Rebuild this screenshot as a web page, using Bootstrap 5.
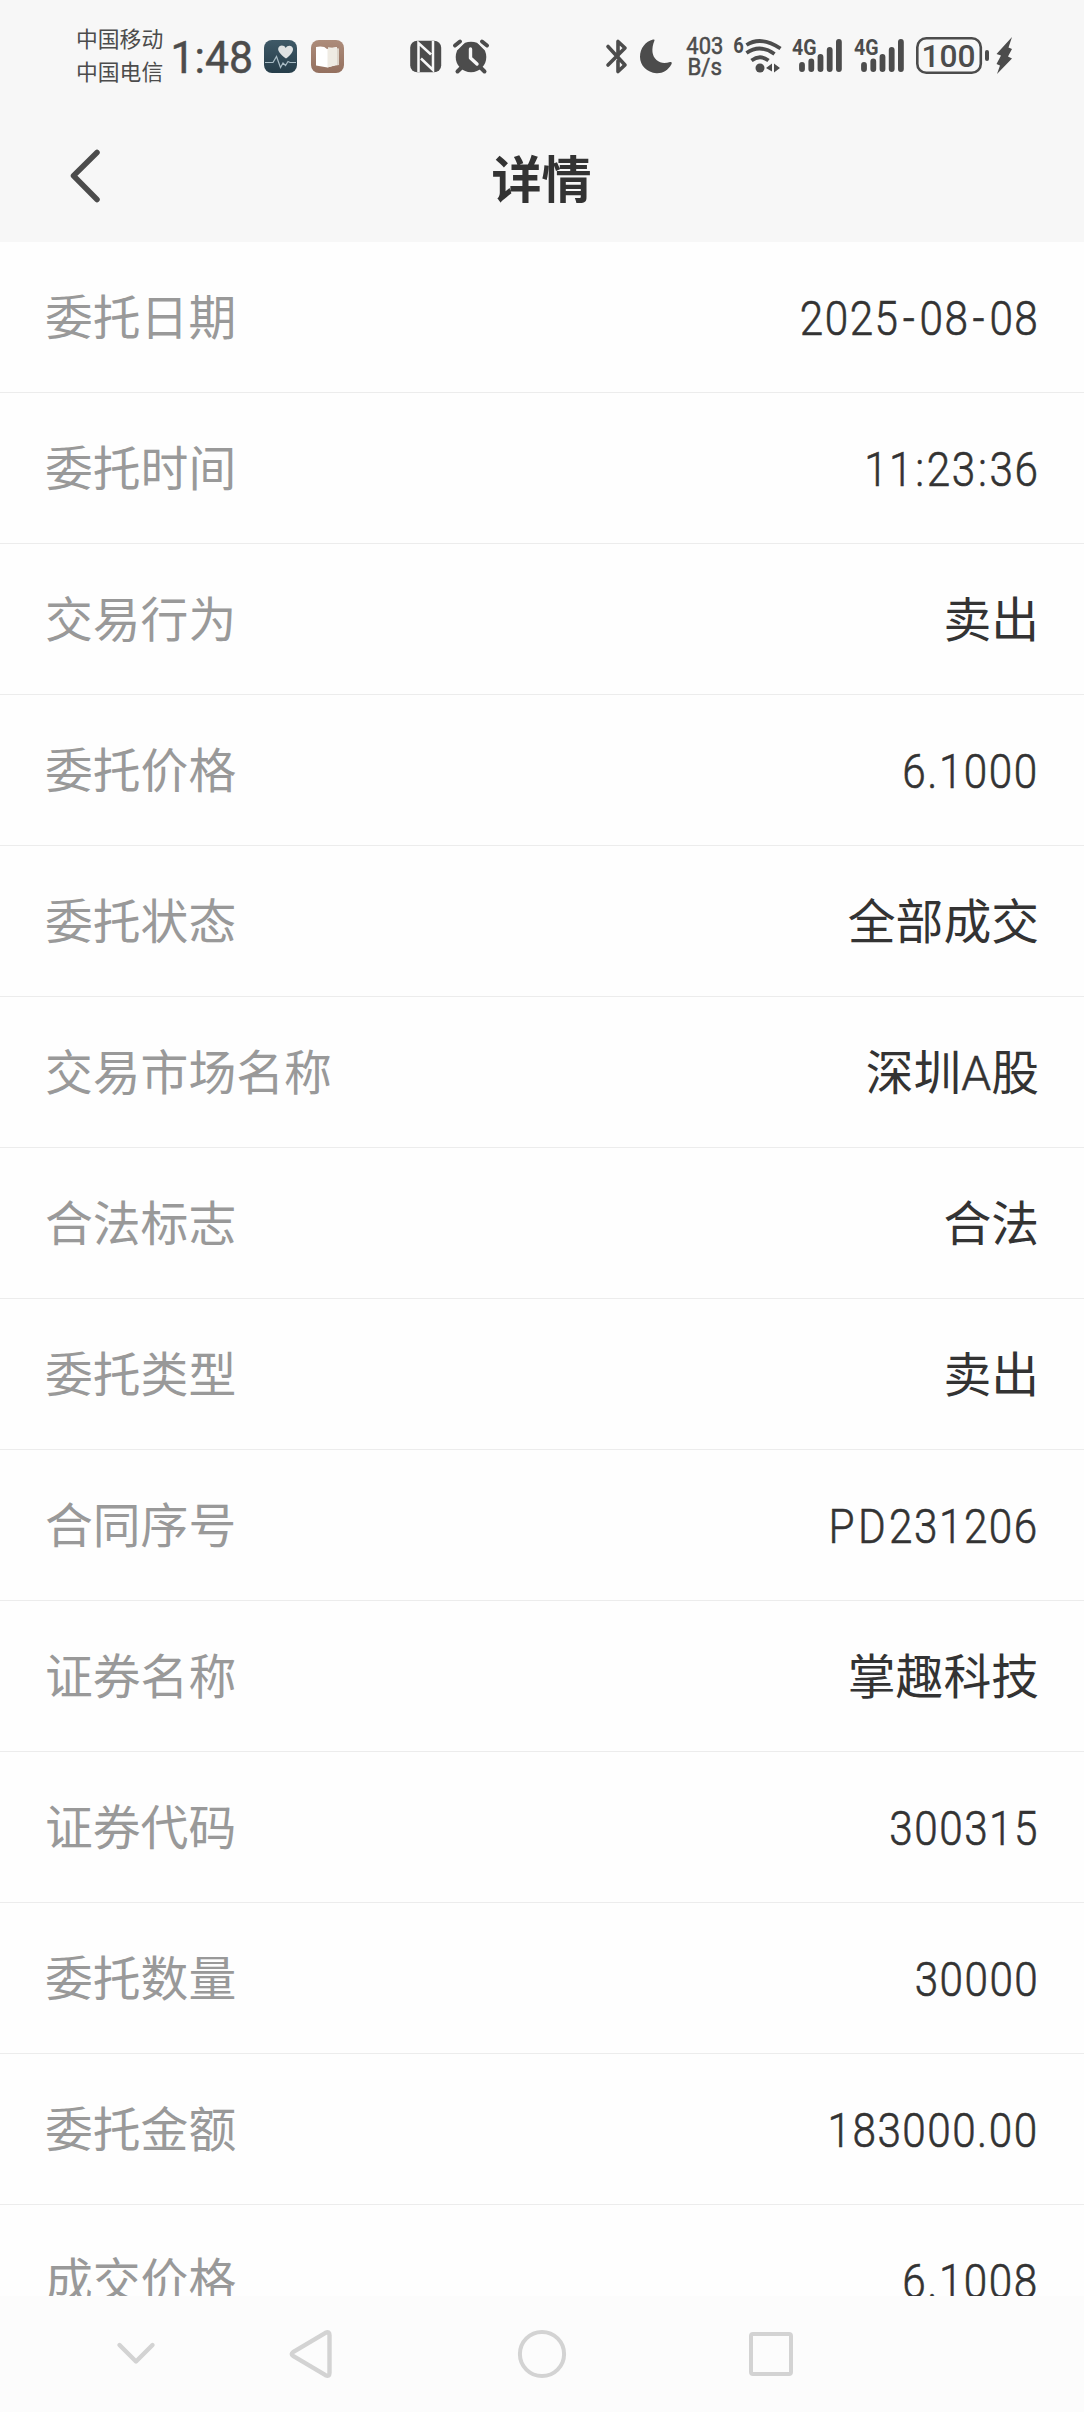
<!DOCTYPE html>
<html lang="zh-CN">
<head>
<meta charset="utf-8">
<meta name="viewport" content="width=device-width, initial-scale=1">
<title>详情</title>
<link rel="stylesheet" href="https://cdn.jsdelivr.net/npm/bootstrap@5.3.0/dist/css/bootstrap.min.css">
<style>
  body { font-family: Roboto, "Noto Sans CJK SC", sans-serif; color: #333; }
  .screen { height: 2412px; }
  .topbar { background: #f7f7f7; }
  .status { height: 110px; padding-left: 76px; color: #4c4c4c; fill: #4c4c4c; }
  .status svg, .titlebar svg, .sysnav svg { display: block; flex: none; }
  .carriers { width: 96px; font-size: 21.8px; line-height: 33px; padding-top: 21px; font-family: "Noto Sans CJK SC", sans-serif; }
  .titlebar { height: 132px; padding: 0 71px 0 70px; }
  .titlebar h1 { font-size: 50px; line-height: 60px; font-family: "Noto Sans CJK SC", sans-serif; }
  .side { width: 30px; }
  .details { background: #fefefe; }
  .detail { height: 151px; flex: none; padding: 0 45px; border-bottom: 1px solid #ececec; font-size: 47.8px; line-height: 72px; }
  .detail dt { font-weight: 400; color: #999; font-family: "Noto Sans CJK SC", sans-serif; padding-bottom: 4px; }
  .detail dd { font-family: "Noto Sans CJK SC", sans-serif; padding-bottom: 4px; }
  .detail dd.num { font-family: Roboto, sans-serif; font-weight: 300; font-size: 48.6px; letter-spacing: 1.7px; transform: scaleX(.87); transform-origin: right; -webkit-text-stroke: .6px #333; padding: 4px 0 0; }
  .latin { font-family: Roboto, sans-serif; font-weight: 300; line-height: 1; -webkit-text-stroke: .5px #333; }
  .prefix { letter-spacing: 4px; }
  .dash { display: inline-block; width: 23px; text-align: center; }
  .sep { padding: 0 1.4px; }
  .sysnav { height: 116px; background: #fcfcfc; flex: none; padding-left: 112px; }
</style>
</head>
<body>
<div class="screen d-flex flex-column overflow-hidden">
  <header class="topbar flex-shrink-0">
    <div class="status d-flex">
      <div class="carriers text-nowrap">中国移动<br>中国电信</div>
      <svg width="84" height="110" viewBox="172 0 84 110"><text x="170.500" y="72.500" font-size="44" textLength="82.500" lengthAdjust="spacingAndGlyphs" stroke="#4c4c4c" stroke-width=".5" font-family="Roboto">1:48</text></svg>
      <!-- health and reading app icons -->
      <svg width="92" height="110" viewBox="256 0 92 110">
        <defs>
          <linearGradient id="gh" x2="0" y2="1"><stop stop-color="#3f5967"/><stop offset="1" stop-color="#263e4a"/></linearGradient>
          <linearGradient id="gb" x2="0" y2="1"><stop stop-color="#ad8c7a"/><stop offset="1" stop-color="#94705f"/></linearGradient>
        </defs>
        <rect x="264" y="40" width="33" height="33" rx="8" fill="url(#gh)"/>
        <path d="M286 58.500 C280 54 277.800 51 278.200 48.500 C278.800 45 284 44.500 285.700 48 C287.500 44.500 292.500 45.300 293 48.700 C293.300 52 290 55.500 286 58.500Z" fill="#dfe2e3"/>
        <path d="M265 62.500H273L276.500 56.500L280.500 67.500L283 63L285.500 65.500L288 61.500L290 62.500H296" fill="none" stroke="#a9bcc5" stroke-width="1.200"/>
        <rect x="311" y="40" width="33" height="33" rx="8" fill="url(#gb)"/>
        <path d="M328 47 L339 48.500V65L328 67Z" fill="#ddd4c9"/>
        <path d="M316 47 Q324 45.500 327 49 L337 47V64.500L327.500 67.500L316 65.500Z" fill="#fff"/>
        <path d="M327.500 49 L337 47V64.500L327.500 67.500Z" fill="#efebe3"/>
      </svg>
      <!-- NFC and alarm -->
      <svg width="142" height="110" viewBox="348 0 142 110">
        <rect x="410.200" y="40.800" width="31" height="31.400" rx="7"/>
        <path d="M418.500 72V43L431 54.500M433 41V70L421 58.500" fill="none" stroke="#f7f7f7" stroke-width="2.500"/>
        <circle cx="471" cy="57" r="15.300"/>
        <path d="M455 45.500L460 41.500M487 45.500L482 41.500M461 68L457.500 71.500M481 68L484.500 71.500" stroke="#4c4c4c" stroke-width="4" stroke-linecap="round"/>
        <path d="M457 49.500L464 42.500M485 49.500L478 42.500" stroke="#f7f7f7" stroke-width="1.600"/>
        <path d="M470.500 49V58L477 64" fill="none" stroke="#f7f7f7" stroke-width="3.400" stroke-linecap="round" stroke-linejoin="round"/>
      </svg>
      <!-- Bluetooth, do not disturb, network speed -->
      <svg width="238" height="110" viewBox="490 0 238 110">
        <path d="M608 46.500L625 65L618 71.500V61M608 65L625 48L618 41.500V56" fill="none" stroke="#4c4c4c" stroke-width="3.600" stroke-linecap="round" stroke-linejoin="round"/>
        <path d="M654.500 40.500C651 49 652 56 656.500 60C660.500 63.500 665 63.500 670 62Q672.500 61.500 671.600 64C668 70.500 662.500 73.500 656.500 73.200C647 72.600 640 65.500 640 57C640 48 645.500 41.500 653 39.500Q655 39.200 654.500 40.500Z"/>
        <g font-family="Roboto" font-size="23.500" stroke="#4c4c4c" stroke-width=".5"><text x="686.300" y="54" textLength="37" lengthAdjust="spacingAndGlyphs">403</text><text x="687.500" y="75" textLength="34.500" lengthAdjust="spacingAndGlyphs">B/s</text></g>
      </svg>
      <!-- Wi-Fi and mobile signal -->
      <svg width="180" height="110" viewBox="728 0 180 110">
        <g font-family="Roboto" font-size="22" font-weight="700"><text x="733.300" y="53" textLength="10.500" lengthAdjust="spacingAndGlyphs">6</text><text x="792" y="55" textLength="24.500" lengthAdjust="spacingAndGlyphs">4G</text><text x="854" y="55" textLength="24.500" lengthAdjust="spacingAndGlyphs">4G</text></g>
        <g fill="none" stroke="#4c4c4c" stroke-width="3.800"><path d="M746.500 45Q761 35.500 780.500 48.500M746.500 53Q760 43.500 774.500 54M751.500 60.500Q760 54 768.500 60.500"/></g>
        <circle cx="760" cy="68" r="4.500"/><path d="M766 68L772 63.500V71.500ZM780 68L774 63.500V72.500Z"/>
        <g stroke="#4c4c4c" stroke-width="5.800" stroke-linecap="round"><path d="M802 65V69M811.300 61.500V69M820.500 57V69M829.700 50V69M838.900 42V69"/><path d="M864 65V69M873.300 61.500V69M882.500 57V69M891.700 50V69M900.900 42V69"/></g>
      </svg>
      <!-- battery -->
      <svg width="110" height="110" viewBox="908 0 110 110">
        <rect x="917.300" y="38.300" width="63.500" height="34.500" rx="9" fill="none" stroke="#4c4c4c" stroke-width="2.600"/>
        <text x="921.500" y="66.500" font-family="Roboto" font-size="31" font-weight="500" textLength="54" lengthAdjust="spacingAndGlyphs">100</text>
        <rect x="985" y="50" width="4" height="11" rx="2"/>
        <path d="M1012 37L996.500 54L1001 55.500L996.500 64L1000 65.500L997 74L1012 58.500L1008 56.500L1012 49L1008.500 47.500Z"/>
      </svg>
    </div>
    <div class="titlebar d-flex justify-content-between align-items-center">
      <svg class="side" width="30" height="132" viewBox="70 110 30 132"><path d="M97 152.500L73.500 175.800L97 199.500" fill="none" stroke="#4c4c4c" stroke-width="5.500" stroke-linecap="round" stroke-linejoin="round"/></svg>
      <h1 class="fw-bold mb-0">详情</h1>
      <span class="side"></span>
    </div>
  </header>
  <main class="details flex-grow-1 overflow-hidden">
    <dl class="mb-0">
      <div class="detail d-flex justify-content-between align-items-center"><dt>委托日期</dt><dd class="num mb-0">2025<span class="dash">-</span>08<span class="dash">-</span>08</dd></div>
      <div class="detail d-flex justify-content-between align-items-center"><dt>委托时间</dt><dd class="num mb-0">11<span class="sep">:</span>23<span class="sep">:</span>36</dd></div>
      <div class="detail d-flex justify-content-between align-items-center"><dt>交易行为</dt><dd class="mb-0">卖出</dd></div>
      <div class="detail d-flex justify-content-between align-items-center"><dt>委托价格</dt><dd class="num mb-0">6.1000</dd></div>
      <div class="detail d-flex justify-content-between align-items-center"><dt>委托状态</dt><dd class="mb-0">全部成交</dd></div>
      <div class="detail d-flex justify-content-between align-items-center"><dt>交易市场名称</dt><dd class="mb-0">深圳<span class="latin">A</span>股</dd></div>
      <div class="detail d-flex justify-content-between align-items-center"><dt>合法标志</dt><dd class="mb-0">合法</dd></div>
      <div class="detail d-flex justify-content-between align-items-center"><dt>委托类型</dt><dd class="mb-0">卖出</dd></div>
      <div class="detail d-flex justify-content-between align-items-center"><dt>合同序号</dt><dd class="num mb-0"><span class="prefix">PD</span>231206</dd></div>
      <div class="detail d-flex justify-content-between align-items-center"><dt>证券名称</dt><dd class="mb-0">掌趣科技</dd></div>
      <div class="detail d-flex justify-content-between align-items-center"><dt>证券代码</dt><dd class="num mb-0">300315</dd></div>
      <div class="detail d-flex justify-content-between align-items-center"><dt>委托数量</dt><dd class="num mb-0">30000</dd></div>
      <div class="detail d-flex justify-content-between align-items-center"><dt>委托金额</dt><dd class="num mb-0">183000.00</dd></div>
      <div class="detail d-flex justify-content-between align-items-center"><dt>成交价格</dt><dd class="num mb-0">6.1008</dd></div>
    </dl>
  </main>
  <nav class="sysnav d-flex">
    <svg width="170" height="116" viewBox="112 2296 170 116" fill="none" stroke="#d3d3d3" stroke-width="4.400" stroke-linecap="round" stroke-linejoin="round"><path d="M119.500 2345L136 2361.500L152.500 2345"/></svg>
    <svg width="230" height="116" viewBox="282 2296 230 116" fill="none" stroke="#d3d3d3" stroke-width="4.400" stroke-linejoin="round"><path d="M293 2352.200L325.500 2332.800Q329.500 2331 329.500 2335V2373Q329.500 2377 325.500 2375.200L293 2355.800Q290.500 2354 293 2352.200Z"/></svg>
    <svg width="230" height="116" viewBox="512 2296 230 116" fill="none" stroke="#d3d3d3" stroke-width="4"><circle cx="542" cy="2354" r="22.100"/></svg>
    <svg width="60" height="116" viewBox="742 2296 60 116" fill="none" stroke="#d3d3d3" stroke-width="4"><rect x="751" y="2334" width="40" height="40" rx="2"/></svg>
  </nav>
</div>
<script src="https://cdn.jsdelivr.net/npm/bootstrap@5.3.0/dist/js/bootstrap.bundle.min.js"></script>
</body>
</html>
